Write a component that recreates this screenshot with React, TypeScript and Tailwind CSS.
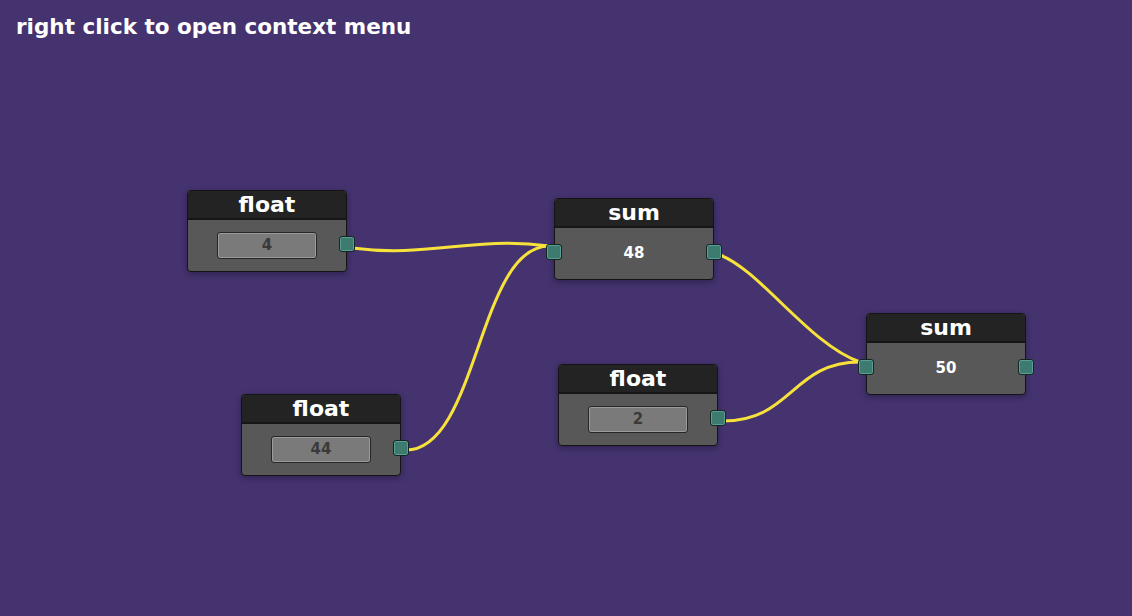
import React from "react";

type NodeData = {
  id: string;
  title: string;
  kind: "float" | "sum";
  value: string;
  x: number;
  y: number;
};

const nodes: NodeData[] = [
  { id: "a", title: "float", kind: "float", value: "4", x: 187, y: 190 },
  { id: "b", title: "float", kind: "float", value: "44", x: 241, y: 394 },
  { id: "c", title: "float", kind: "float", value: "2", x: 558, y: 364 },
  { id: "d", title: "sum", kind: "sum", value: "48", x: 554, y: 198 },
  { id: "e", title: "sum", kind: "sum", value: "50", x: 866, y: 313 },
];

// wire paths, drawn under the nodes
const wires: string[] = [
  "M 352 248 C 430 258, 470 236, 549 246",
  "M 406 450 C 478 450, 478 246, 549 246",
  "M 720 255 C 760 270, 810 345, 860 362",
  "M 723 421 C 792 421, 792 362, 860 362",
];

function Port({ side }: { side: "left" | "right" }) {
  return (
    <div
      className={
        "absolute top-[45px] h-[16px] w-[16px] rounded-[3px] border border-[#152522] bg-[#3d7a70] shadow-[inset_0_0_0_1px_#5b9f93] " +
        (side === "left" ? "left-[-9px]" : "right-[-9px]")
      }
    />
  );
}

function GraphNode({ node }: { node: NodeData }) {
  return (
    <div
      className="absolute flex h-[82px] w-[160px] flex-col rounded-[4px] border border-[#141414] bg-[#585858] shadow-[0_2px_6px_rgba(20,10,40,0.45)]"
      style={{ left: node.x, top: node.y }}
    >
      <div className="flex h-[29px] items-center justify-center rounded-t-[3px] border-b-2 border-[#161616] bg-[#242323] text-[22px] font-bold leading-none text-white">
        {node.title}
      </div>
      <div className="flex flex-1 items-center justify-center">
        {node.kind === "float" ? (
          <div className="flex h-[27px] w-[100px] items-center justify-center rounded-[3px] border border-[#262626] bg-[#7a7a7a] text-[15px] font-bold text-[#3a3a3a] shadow-[inset_0_0_0_1px_#9b9b9b]">
            {node.value}
          </div>
        ) : (
          <span className="text-[15px] font-bold text-white">{node.value}</span>
        )}
      </div>
      {node.kind === "sum" && <Port side="left" />}
      <Port side="right" />
    </div>
  );
}

export default function App() {
  return (
    <div className="relative h-[616px] w-full overflow-hidden bg-[#45336f] font-['DejaVu_Sans',sans-serif]">
      <p className="px-4 pt-[15px] text-[21.5px] font-bold leading-6 text-white">
        right click to open context menu
      </p>

      <svg className="absolute inset-0 h-full w-full" width="1132" height="616">
        {wires.map((d, i) => (
          <path key={i} d={d} fill="none" stroke="#f7e23c" strokeWidth={3} />
        ))}
      </svg>

      {nodes.map((n) => (
        <GraphNode key={n.id} node={n} />
      ))}
    </div>
  );
}
